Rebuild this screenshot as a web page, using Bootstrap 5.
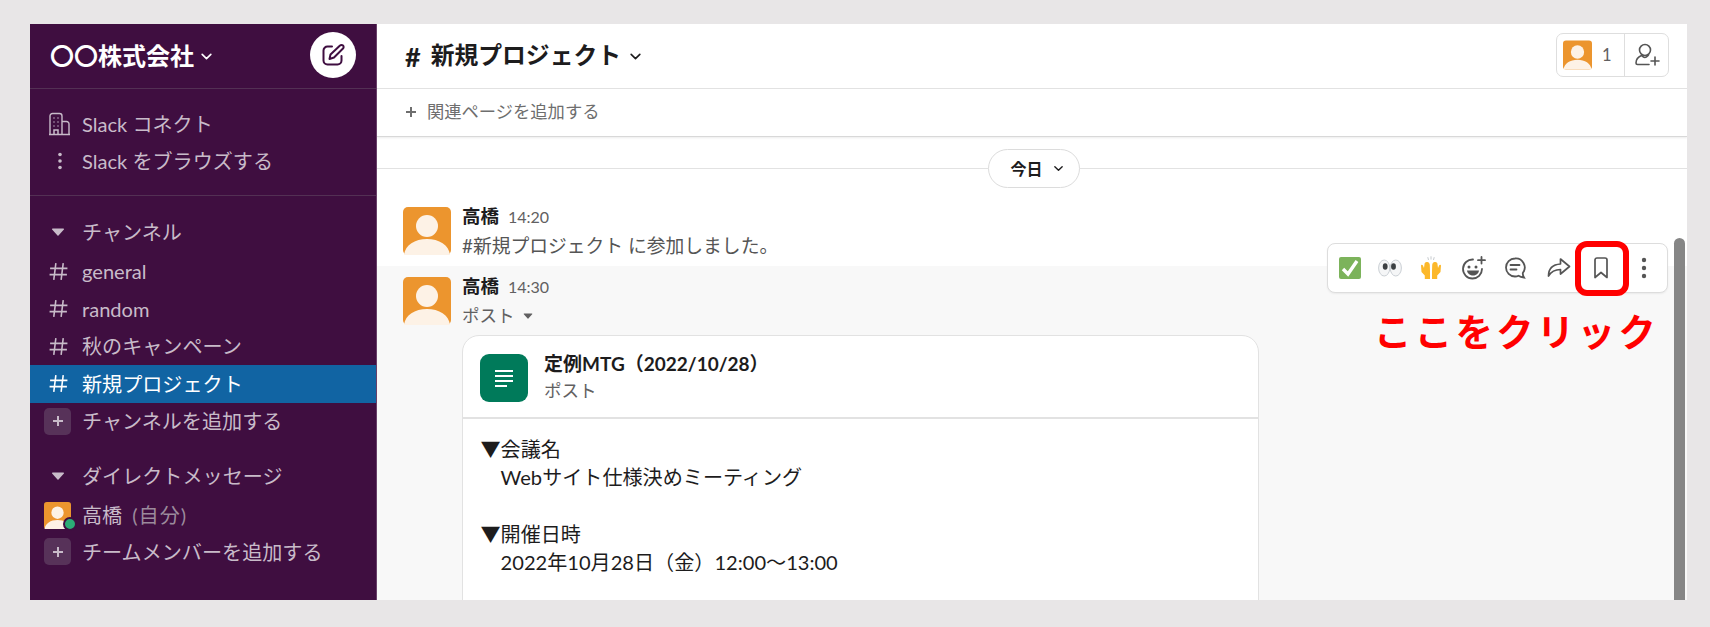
<!DOCTYPE html>
<html lang="ja">
<head>
<meta charset="UTF-8">
<title>新規プロジェクト</title>
<link href="https://cdn.jsdelivr.net/npm/bootstrap@5.3.0/dist/css/bootstrap.min.css" rel="stylesheet">
<style>
  body { background: #e8e6e7; font-family: Lato, "Noto Sans CJK JP", sans-serif; overflow: hidden; }
  .app-frame { width: 1657px; height: 576px; margin: 24px 0 0 30px; overflow: hidden; }

  /* sidebar */
  .side { width: 347px; background: #3f0e40; border-right: 1px solid #694069; color: #c8bbc9; font-size: 20.1px; }
  .side-head { height: 65px; padding: 0 20px 0 20px; border-bottom: 1px solid #533054; }
  .side-title { color: #fff; font-size: 24px; font-weight: 700; gap: 6px; }
  .compose-btn { width: 46px; height: 46px; background: #fff; margin-top: -2px; }
  .side-group { padding: 16px 0 15px; border-bottom: 1px solid #533054; }
  .side-list { padding-top: 17px; }
  .side-row { height: 37.5px; padding-left: 18px; white-space: nowrap; }
  .side-row.is-active { background: #1164a3; color: #fff; }
  .side-row.sec-head { margin-bottom: 2px; }
  .side-row.dm-head { margin-top: 17px; margin-bottom: 2px; }
  .side-row.dm-last { margin-top: -1px; }
  .side-ico { width: 34px; flex: none; font-size: 23px; line-height: 1; }
  .side-ico svg { display: block; }
  .tri-ico { margin-left: 3px; }
  .add-box { width: 27px; height: 27px; margin-left: -4px; margin-right: 11px; background: #573259; border-radius: 5px; flex: none; }
  .self-ava { width: 27px; height: 27px; margin-left: -4px; margin-right: 11px; flex: none; position: relative; }
  .self-ava svg { display: block; }
  .online-dot { position: absolute; right: -6px; bottom: -2px; width: 14px; height: 14px; border-radius: 50%; background: #2bac76; border: 2px solid #3f0e40; }
  .muted-self { color: #9b8a9c; margin-left: 10px; letter-spacing: 1px; }

  /* main */
  .main-pane { background: #fff; min-width: 0; }
  .top-bar { height: 65px; padding: 0 18px 0 28px; border-bottom: 1px solid #e3e3e3; }
  .chan-title { font-size: 23.800px; font-weight: 700; color: #1d1c1d; }
  .chan-title .hash { margin-right: 10px; font-size: 27px; line-height: 1; }
  .member-box { width: 113px; height: 44px; border: 1px solid #dedede; border-radius: 7px; margin-top: -2px; }
  .member-left { width: 68px; padding-left: 6px; border-right: 1px solid #dedede; color: #616061; font-size: 16.500px; gap: 6px; }
  .member-right { flex: 1; }
  .sub-bar { height: 48px; padding: 0 0 2px 27px; border-bottom: 1px solid #d8d8d8; box-shadow: 0 1px 2px rgba(0,0,0,.08); color: #6e6e6e; font-size: 17.300px; }
  .sub-bar svg { margin-right: 9px; }
  .day-rule { height: 1px; background: #e2e2e2; margin-top: 31px; position: relative; }
  .day-pill { position: absolute; left: 611px; top: -19px; width: 92px; height: 39px; padding-left: 6px; background: #fff; border: 1px solid #dcdcdc; border-radius: 20px; font-size: 16px; font-weight: 700; color: #1d1c1d; gap: 10px; }
  .msg-row { padding-left: 26px; }
  .msg-first { padding-top: 38px; height: 97px; }
  .msg-hover { background: #f8f8f8; padding-top: 11px; flex: 1; overflow: hidden; }
  .ava-lg { width: 48px; height: 48px; flex: none; }
  .msg-body { margin: -2px 0 0 11px; width: 797px; }
  .msg-name { font-size: 18.500px; font-weight: 700; color: #1d1c1d; line-height: 22px; }
  .msg-time { font-size: 16px; color: #616061; font-weight: 400; margin-left: 9px; }
  .msg-line { font-size: 18.800px; color: #555; line-height: 26px; margin-top: 5px; }
  .post-kind { font-size: 17.500px; color: #616061; line-height: 26px; margin-top: 5px; gap: 8px; }
  .post-card { margin-top: 6px; border: 1px solid #e2e2e2; border-radius: 17px 17px 0 0; background: #fff; padding-bottom: 80px; }
  .post-head { height: 83px; padding: 2px 0 0 17px; border-bottom: 2px solid #e2e2e2; }
  .post-ico { width: 48px; height: 48px; background: #007a5a; border-radius: 9px; margin-right: 16px; flex: none; }
  .post-title { font-size: 19px; font-weight: 700; color: #1d1c1d; line-height: 24px; }
  .post-sub { font-size: 17.500px; color: #616061; line-height: 26px; margin-top: 2px; }
  .post-text { padding: 16px 0 0 17.500px; font-size: 20.100px; line-height: 28.200px; color: #1d1c1d; }

  /* floating toolbar and annotation */
  .msg-tools { position: absolute; left: 950px; top: 219px; width: 341px; height: 50px; background: #fff; border: 1px solid #dddddd; border-radius: 8px; padding-left: 1px; box-shadow: 0 1px 2px rgba(0,0,0,.06); }
  .tool-cell { width: 41.800px; height: 100%; flex: none; position: relative; }
  .red-mark { position: absolute; left: -5px; top: -3px; width: 54px; height: 55px; border: 6px solid #f00; border-radius: 12px; }
  .click-note { position: absolute; left: 997px; top: 282px; color: #f00; font-size: 37.500px; font-weight: 700; letter-spacing: 3.200px; line-height: 52px; white-space: nowrap; }
  .scroll-thumb { position: absolute; left: 1297px; top: 214px; width: 11px; height: 400px; background: #868686; border-radius: 6px 6px 0 0; }
</style>
</head>
<body>
<svg width="0" height="0" class="position-absolute">
  <symbol id="avatar" viewBox="0 0 48 48">
    <rect width="48" height="48" rx="5" fill="#ec952e"/>
    <circle cx="24" cy="19" r="11" fill="#fdf2e6"/>
    <path d="M1 48c1-10 11-16 23-16s22 6 23 16z" fill="#fdf2e6"/>
  </symbol>
  <symbol id="hash" viewBox="0 0 20 20">
    <path d="M7.500 2 5.500 18M14.500 2l-2 16M2 7h16.500M1.500 13H18" fill="none" stroke="currentColor" stroke-width="1.500"/>
  </symbol>
  <symbol id="chev" viewBox="0 0 12 12">
    <path d="M2 4l4 4 4-4" fill="none" stroke="currentColor" stroke-width="1.500" stroke-linecap="round" stroke-linejoin="round"/>
  </symbol>
  <symbol id="plus" viewBox="0 0 14 14">
    <path d="M7 2v10M2 7h10" fill="none" stroke="currentColor" stroke-width="2"/>
  </symbol>
  <symbol id="tri" viewBox="0 0 14 10">
    <path d="M1.500 1.500h11a.6.6 0 0 1 .4 1L7.500 8.500a.7.7 0 0 1-1 0L1.100 2.500a.6.6 0 0 1 .4-1z" fill="currentColor"/>
  </symbol>
</svg>

<div class="app-frame d-flex">
  <aside class="side flex-shrink-0">
    <div class="side-head d-flex align-items-center justify-content-between">
      <div class="side-title d-flex align-items-center"><span>〇〇株式会社</span><svg width="13" height="13"><use href="#chev"/></svg></div>
      <div class="compose-btn rounded-circle d-flex align-items-center justify-content-center">
        <svg width="24" height="24" viewBox="0 0 24 24" fill="none" stroke="#3f0e40" stroke-width="2" stroke-linecap="round" stroke-linejoin="round">
          <path d="M11 3.500H6.500a4 4 0 0 0-4 4v10a4 4 0 0 0 4 4h10a4 4 0 0 0 4-4V13"/>
          <path d="M19 2.500a2 2 0 0 1 3 3L13 14.500l-4.500 1.500 1-4.500z"/>
        </svg>
      </div>
    </div>

    <div class="side-group">
      <div class="side-row d-flex align-items-center">
        <span class="side-ico"><svg width="23" height="24" viewBox="0 0 23 24" fill="none" stroke="currentColor" stroke-width="1.400"><path d="M2 22.500V4a2.500 2.500 0 0 1 2.500-2.500h7A2.500 2.500 0 0 1 14 4v18.500M14 9.500h4.500A2.500 2.500 0 0 1 21 12v10.500M1 22.500h21"/><path d="M5.500 6h1M9.500 6h1M5.500 10h1M9.500 10h1M5.500 14h1M9.500 14h1M6 22v-4h4v4" stroke-width="1.500"/></svg></span>
        <span>Slack コネクト</span>
      </div>
      <div class="side-row d-flex align-items-center">
        <span class="side-ico"><svg width="23" height="24" viewBox="0 0 23 24" fill="currentColor"><circle cx="12" cy="5.500" r="1.800"/><circle cx="12" cy="12" r="1.800"/><circle cx="12" cy="18.500" r="1.800"/></svg></span>
        <span>Slack をブラウズする</span>
      </div>
    </div>

    <div class="side-list">
      <div class="side-row sec-head d-flex align-items-center">
        <span class="side-ico"><svg width="14" height="10" class="tri-ico"><use href="#tri"/></svg></span><span>チャンネル</span>
      </div>
      <div class="side-row d-flex align-items-center">
        <span class="side-ico"><svg width="21" height="21"><use href="#hash"/></svg></span><span>general</span>
      </div>
      <div class="side-row d-flex align-items-center">
        <span class="side-ico"><svg width="21" height="21"><use href="#hash"/></svg></span><span>random</span>
      </div>
      <div class="side-row d-flex align-items-center">
        <span class="side-ico"><svg width="21" height="21"><use href="#hash"/></svg></span><span>秋のキャンペーン</span>
      </div>
      <div class="side-row is-active d-flex align-items-center">
        <span class="side-ico"><svg width="21" height="21"><use href="#hash"/></svg></span><span>新規プロジェクト</span>
      </div>
      <div class="side-row d-flex align-items-center">
        <span class="add-box d-flex align-items-center justify-content-center"><svg width="14" height="14"><use href="#plus"/></svg></span><span>チャンネルを追加する</span>
      </div>
      <div class="side-row dm-head d-flex align-items-center">
        <span class="side-ico"><svg width="14" height="10" class="tri-ico"><use href="#tri"/></svg></span><span>ダイレクトメッセージ</span>
      </div>
      <div class="side-row d-flex align-items-center">
        <span class="self-ava"><svg width="27" height="27"><use href="#avatar"/></svg><span class="online-dot"></span></span><span>高橋<span class="muted-self">(自分)</span></span>
      </div>
      <div class="side-row dm-last d-flex align-items-center">
        <span class="add-box d-flex align-items-center justify-content-center"><svg width="14" height="14"><use href="#plus"/></svg></span><span>チームメンバーを追加する</span>
      </div>
    </div>
  </aside>

  <main class="main-pane flex-grow-1 d-flex flex-column position-relative overflow-hidden">
    <div class="top-bar d-flex align-items-center justify-content-between flex-shrink-0">
      <div class="chan-title d-flex align-items-center"><span class="hash">#</span><span>新規プロジェクト</span><svg width="13" height="13" class="ms-2"><use href="#chev"/></svg></div>
      <div class="member-box d-flex">
        <div class="member-left d-flex align-items-center">
          <svg width="29" height="30"><use href="#avatar"/></svg><span class="ms-1">1</span>
        </div>
        <div class="member-right d-flex align-items-center justify-content-center">
          <svg width="26" height="26" viewBox="0 0 26 26" fill="none" stroke="#555" stroke-width="1.600" stroke-linecap="round"><circle cx="11" cy="8" r="5.500"/><path d="M14.500 13c-1 1-2 2.500-3.500 2.500S8.500 14 7.500 13.500C4 15 2 18 2 21a1.500 1.500 0 0 0 1.500 1.500H15M21 15v8M17 19h8"/></svg>
        </div>
      </div>
    </div>
    <div class="sub-bar d-flex align-items-center flex-shrink-0">
      <svg width="14" height="14"><use href="#plus"/></svg><span>関連ページを追加する</span>
    </div>

    <div class="day-rule flex-shrink-0">
      <div class="day-pill d-flex align-items-center justify-content-center"><span>今日</span><svg width="11" height="11"><use href="#chev"/></svg></div>
    </div>

    <div class="msg-row msg-first d-flex flex-shrink-0">
      <svg class="ava-lg"><use href="#avatar"/></svg>
      <div class="msg-body">
        <div class="msg-name">高橋<span class="msg-time">14:20</span></div>
        <div class="msg-line">#新規プロジェクト に参加しました。</div>
      </div>
    </div>

    <div class="msg-row msg-hover d-flex">
      <svg class="ava-lg"><use href="#avatar"/></svg>
      <div class="msg-body">
        <div class="msg-name">高橋<span class="msg-time">14:30</span></div>
        <div class="post-kind d-flex align-items-center">ポスト <svg width="10" height="8"><use href="#tri"/></svg></div>
        <div class="post-card">
          <div class="post-head d-flex align-items-center">
            <div class="post-ico d-flex align-items-center justify-content-center">
              <svg width="20" height="20" viewBox="0 0 20 20" stroke="#fff" stroke-width="2.200"><path d="M1 3h18M1 8h18M1 13h18M1 18h12"/></svg>
            </div>
            <div>
              <div class="post-title">定例MTG（2022/10/28）</div>
              <div class="post-sub">ポスト</div>
            </div>
          </div>
          <div class="post-text">
            <div>▼会議名</div>
            <div>　Webサイト仕様決めミーティング</div>
            <div>&nbsp;</div>
            <div>▼開催日時</div>
            <div>　2022年10月28日（金）12:00～13:00</div>
          </div>
        </div>
      </div>
    </div>

    <div class="msg-tools d-flex align-items-center">
      <div class="tool-cell d-flex align-items-center justify-content-center">
        <svg width="22" height="22" viewBox="0 0 22 22"><rect width="22" height="22" rx="2" fill="#7cb35b"/><path d="M4 12l5 5 9-13" fill="none" stroke="#fff" stroke-width="3.400"/></svg>
      </div>
      <div class="tool-cell d-flex align-items-center justify-content-center">
        <svg width="24" height="20" viewBox="0 0 24 20" class="me-1"><ellipse cx="6.200" cy="10" rx="5.600" ry="8" fill="#f5f6f7" stroke="#c5cbd0" stroke-width=".9"/><ellipse cx="17.800" cy="10" rx="5.600" ry="8" fill="#f5f6f7" stroke="#c5cbd0" stroke-width=".9"/><ellipse cx="7.200" cy="8.500" rx="2.400" ry="3.200" fill="#3c4043"/><ellipse cx="15.500" cy="8.500" rx="2.400" ry="3.200" fill="#3c4043"/></svg>
      </div>
      <div class="tool-cell d-flex align-items-center justify-content-center">
        <svg width="22" height="24" viewBox="0 0 22 24" class="me-1"><path d="M6.500 6C8.500 5.500 9.800 7 9.800 9l.2 6.500V23H4.800v-3.500L1.500 16 1 9.500c0-1 1.400-1.200 1.800-.2L4 12l.6-4.500C4.800 6.700 5.600 6.200 6.500 6zM15.500 6C13.500 5.500 12.200 7 12.200 9L12 15.500V23h5.200v-3.500l3.300-3.500.5-6.500c0-1-1.400-1.200-1.800-.2L18 12l-.6-4.500c-.2-.8-1-1.300-1.900-1.500z" fill="#fcb82b"/><path d="M7.800 1.200 8.500 4M11 .3V3.500M14.200 1.200 13.500 4" stroke="#bfc4c8" stroke-width=".9"/></svg>
      </div>
      <div class="tool-cell d-flex align-items-center justify-content-center">
        <svg width="25" height="25" viewBox="0 0 25 25" fill="none" stroke="#555" stroke-width="1.800" stroke-linecap="round" class="me-1"><path d="M21 13a9.500 9.500 0 1 1-9-9.500"/><circle cx="8" cy="11" r="1.500" fill="#555" stroke="none"/><circle cx="15" cy="11" r="1.500" fill="#555" stroke="none"/><path d="M6 14.500h12c-.5 3.500-3.200 5-6 5s-5.500-1.500-6-5z" fill="#555" stroke="none"/><path d="M20.500 1v6.500M17 4.200h7"/></svg>
      </div>
      <div class="tool-cell d-flex align-items-center justify-content-center">
        <svg width="24" height="24" viewBox="0 0 24 24" fill="none" stroke="#555" stroke-width="1.800" stroke-linecap="round" class="me-1"><path d="M12 2.500a9 9 0 1 0 0 18c1.500 0 2.500-.3 3.500-.8 1.500 1 3 1.500 5.500 1.800-1-1.500-1.300-3-1.200-4.500A9 9 0 0 0 12 2.500z"/><path d="M7.500 9h9M7.500 13.500h6"/></svg>
      </div>
      <div class="tool-cell d-flex align-items-center justify-content-center">
        <svg width="24" height="22" viewBox="0 0 24 22" fill="none" stroke="#555" stroke-width="1.700" stroke-linejoin="round"><path d="M13.500 2 22.500 9.500 13.500 17v-4.500c-5 0-9 1.500-12 6.500 0-7 4-11.500 12-12z"/></svg>
      </div>
      <div class="tool-cell d-flex align-items-center justify-content-center">
        <svg width="16" height="22" viewBox="0 0 16 22" fill="none" stroke="#555" stroke-width="1.700" stroke-linejoin="round"><path d="M2 3a2 2 0 0 1 2-2h8a2 2 0 0 1 2 2v17.500L8 15.500l-6 5z"/></svg>
        <span class="red-mark"></span>
      </div>
      <div class="tool-cell d-flex align-items-center justify-content-center">
        <svg width="6" height="22" viewBox="0 0 6 22" fill="#555" class="ms-1"><circle cx="3" cy="3" r="2.200"/><circle cx="3" cy="11" r="2.200"/><circle cx="3" cy="19" r="2.200"/></svg>
      </div>
    </div>

    <div class="click-note">ここをクリック</div>
    <div class="scroll-thumb"></div>
  </main>
</div>
<script src="https://cdn.jsdelivr.net/npm/bootstrap@5.3.0/dist/js/bootstrap.bundle.min.js"></script>
</body>
</html>
